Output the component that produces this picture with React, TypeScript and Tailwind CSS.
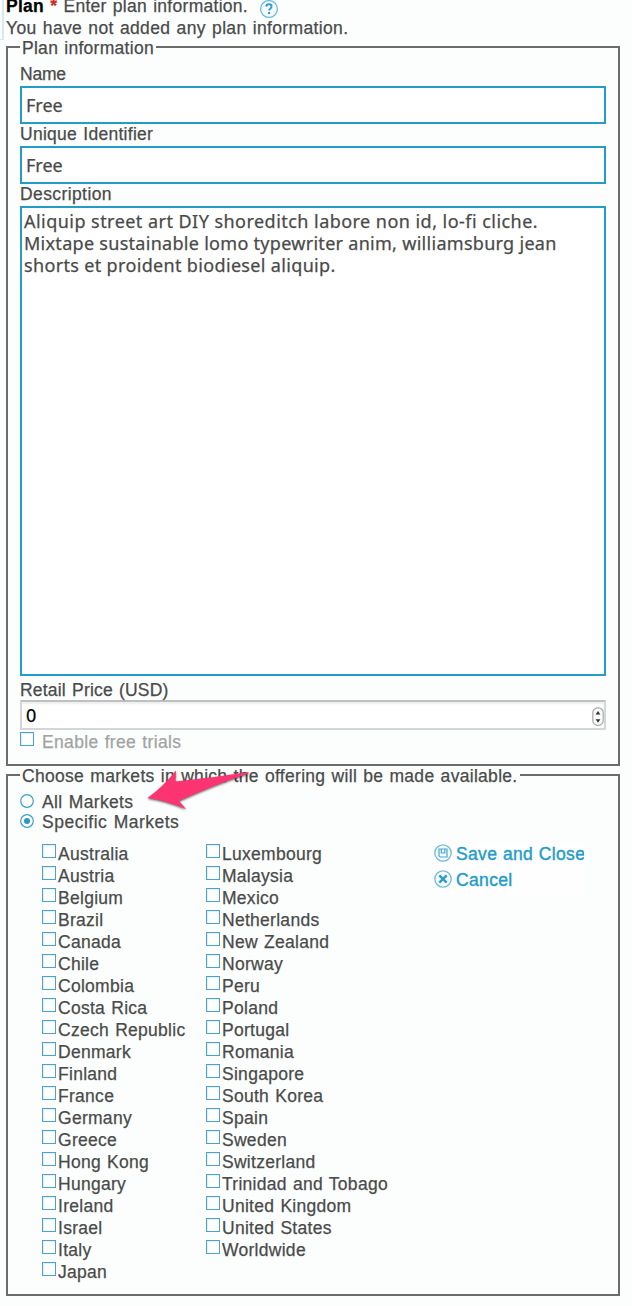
import React from "react";

const firstColumn = [
  "Australia", "Austria", "Belgium", "Brazil", "Canada", "Chile", "Colombia",
  "Costa Rica", "Czech Republic", "Denmark", "Finland", "France", "Germany",
  "Greece", "Hong Kong", "Hungary", "Ireland", "Israel", "Italy", "Japan",
];

const secondColumn = [
  "Luxembourg", "Malaysia", "Mexico", "Netherlands", "New Zealand", "Norway",
  "Peru", "Poland", "Portugal", "Romania", "Singapore", "South Korea", "Spain",
  "Sweden", "Switzerland", "Trinidad and Tobago", "United Kingdom",
  "United States", "Worldwide",
];

function Box() {
  return (
    <span className="block h-[14px] w-[14px] shrink-0 border border-[#4aa3cb] bg-[#fdfefe] shadow-[inset_1px_1px_1px_#e8ecee]" />
  );
}

function Radio({ checked = false }: { checked?: boolean }) {
  return (
    <svg className="block h-[14px] w-[14px] shrink-0" viewBox="0 0 14 14">
      <circle cx="7" cy="7" r="6.3" fill="#fff" stroke="#3a9fc8" strokeWidth="1.2" />
      {checked && <circle cx="7" cy="7" r="3" fill="#2a97c4" />}
    </svg>
  );
}

function Label({ children }: { children: React.ReactNode }) {
  return <div className="h-[22px] leading-[20px]">{children}</div>;
}

function TextField({ value }: { value: string }) {
  return (
    <div className="h-[38px] border-2 border-[#239cc8] bg-white pl-[4px] font-['Noto_Sans',sans-serif] text-[18px] leading-[34px] tracking-[0px]">
      {value}
    </div>
  );
}

function Countries({ names }: { names: string[] }) {
  return (
    <ul>
      {names.map((name) => (
        <li key={name} className="flex h-[22px] gap-[2px] leading-[22px]">
          <span className="pt-px"><Box /></span>
          {name}
        </li>
      ))}
    </ul>
  );
}

export default function App() {
  return (
    <div className="relative h-[1306px] w-[632px] overflow-hidden whitespace-nowrap bg-[#fcfefe] font-['Liberation_Sans',Arial,sans-serif] text-[17.5px] tracking-[0.28px] text-[#4a4a4a] [word-spacing:1px] [-webkit-text-stroke:0.25px_currentColor]">
      <div className="absolute left-0 top-0 h-[40px] w-[4px] border-b border-r-2 border-[#d9e9f3]" />

      <header className="pl-[6px]">
        <div className="flex h-[17px] items-start">
          <p className="-mt-[4px] leading-[20px]">
            <b className="text-black">Plan</b> <b className="text-[#d02a1e]">*</b> Enter plan information.
          </p>
          <svg className="-mt-px ml-[11px] block h-[20px] w-[20px]" viewBox="0 0 20 20">
            <circle cx="10" cy="10" r="8.4" fill="#f6fcfe" stroke="#6cbbd9" strokeWidth="1.3" />
            <path d="M7.3 7.6C7.4 4.5 12.6 4.6 12.6 7.6C12.6 9.4 10.1 9.5 10.1 11.6" fill="none" stroke="#2d9dc8" strokeWidth="1.9" />
            <rect x="9" y="13" width="2.1" height="2.1" fill="#2d9dc8" />
          </svg>
        </div>
        <p className="h-[20px] tracking-[0.35px] leading-[22px]">You have not added any plan information.</p>
      </header>

      <fieldset className="ml-[6px] h-[729px] w-[614px] border-2 border-[#6b6b6b] px-[12px]">
        <legend className="h-[20px] px-[2px] pt-[2px] leading-[18px]">Plan information</legend>
        <div className="pt-[7px]">
          <Label><span className="tracking-[-0.2px]">Name</span></Label>
          <TextField value="Free" />
          <Label>Unique Identifier</Label>
          <TextField value="Free" />
          <Label><span className="tracking-[0.4px]">Description</span></Label>
          <div className="h-[470px] border-2 border-[#239cc8] bg-white pl-[2px] pt-[2px] font-['Noto_Sans',sans-serif] text-[18px] leading-[22px] [word-spacing:0px]">
            <p className="tracking-[0.46px]">Aliquip street art DIY shoreditch labore non id, lo-fi cliche.</p>
            <p className="tracking-[0.29px]">Mixtape sustainable lomo typewriter anim, williamsburg jean</p>
            <p className="tracking-[0.34px]">shorts et proident biodiesel aliquip.</p>
          </div>
          <div className="h-[24px] pt-[4px] tracking-[0.2px] leading-[20px]">Retail Price (USD)</div>
          <div className="flex h-[30px] items-center justify-between border-2 border-[#d6d6d6] border-t-[#c0c0c0] bg-white pl-[4px] font-['Noto_Sans',sans-serif] text-[18px] leading-[26px] text-black shadow-[inset_0_2px_2px_#eeeeee]">
            <span>0</span>
            <svg className="mt-[3px] block h-[20px] w-[12px]" viewBox="0 0 12 20">
              <rect x="0.8" y="0.8" width="10.4" height="17.6" rx="5" fill="#fafafa" stroke="#aaa" strokeWidth="1.2" />
              <path d="M3.6 7.5L6 4L8.4 7.5ZM3.6 12.2H8.4L6 15.7Z" fill="#333" />
            </svg>
          </div>
          <div className="flex gap-[8px] pt-[2px] leading-[20px] text-[#a2a2a2]">
            <Box />
            <span className="tracking-[0.33px]">Enable free trials</span>
          </div>
        </div>
      </fieldset>

      <fieldset className="-mt-px ml-[6px] h-[531px] w-[614px] border-2 border-[#6b6b6b] px-[12px]">
        <legend className="h-[20px] px-[2px] pt-[2px] tracking-[0.3px] leading-[18px]">Choose markets in which the offering will be made available.</legend>
        <div className="pt-[7px]">
          <div className="flex h-[20px] gap-[8px] leading-[20px] tracking-[0.35px]">
            <span className="pt-[2px]"><Radio /></span>All Markets
          </div>
          <div className="flex h-[20px] gap-[8px] leading-[20px] tracking-[0.5px]">
            <span className="pt-[2px]"><Radio checked /></span>Specific Markets
          </div>
          <div className="grid grid-cols-[164px_228px_150px] pl-[22px] pt-[11px]">
            <Countries names={firstColumn} />
            <Countries names={secondColumn} />
            <div className="flex h-[52px] flex-col overflow-hidden bg-[#fefefe] tracking-[0.35px] text-[#239cc8] [word-spacing:0.4px] [-webkit-text-stroke:0.4px_#239cc8]">
              <div className="flex h-[26px] gap-[4px] leading-[22px]">
                <svg className="mt-px block h-[18px] w-[18px] shrink-0" viewBox="0 0 18 18">
                  <circle cx="9" cy="9" r="8.2" fill="#f6fcfe" stroke="#6cbbd9" strokeWidth="1.3" />
                  <path d="M5 5H13V13H6.2L5 11.8ZM7.3 5V9H10.8V5" fill="none" stroke="#45a8cf" strokeWidth="1.2" />
                </svg>
                Save and Close
              </div>
              <div className="flex h-[26px] gap-[4px] leading-[22px]">
                <svg className="mt-px block h-[18px] w-[18px] shrink-0" viewBox="0 0 18 18">
                  <circle cx="9" cy="9" r="8.2" fill="#f6fcfe" stroke="#6cbbd9" strokeWidth="1.3" />
                  <path d="M5.3 5.3L12.7 12.7M12.7 5.3L5.3 12.7" stroke="#2d9dc8" strokeWidth="2.4" />
                </svg>
                Cancel
              </div>
            </div>
          </div>
        </div>
      </fieldset>

      <svg className="absolute left-[140px] top-[760px] h-[60px] w-[120px] drop-shadow-[0_1px_1px_rgba(0,0,0,0.6)]" viewBox="0 0 120 60">
        <path d="M7.5 38Q23 27 36 10.5L35.5 21.5Q72 18 108.5 12L108.5 13.5Q74 25 39 41L46 49Q27 41 7.5 38Z" fill="#fd3472" />
      </svg>
    </div>
  );
}
